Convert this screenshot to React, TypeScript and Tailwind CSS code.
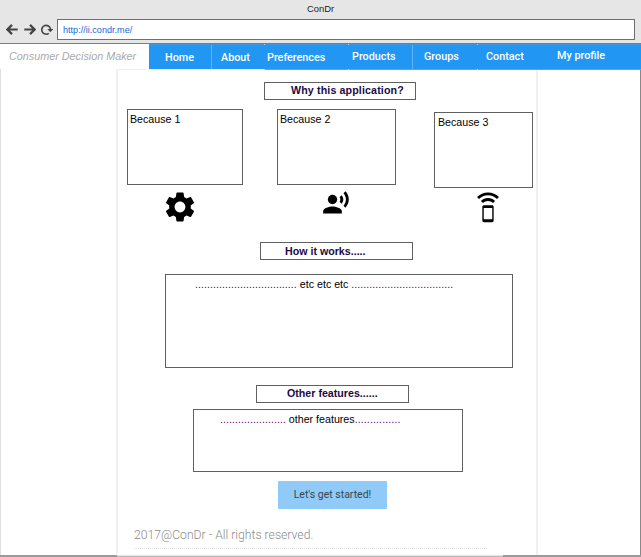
import React from "react";
import { MdSettings, MdRecordVoiceOver, MdSpeakerPhone } from "react-icons/md";

const box = "border border-[#606060] bg-white whitespace-pre";

function Toolbar() {
  return (
    <header className="h-[44px] shrink-0 bg-[#e6e6e6] border-b border-[#7c7c7c]">
      <div className="h-[19px] pt-[1px] pl-[307px] text-[9.4px] leading-[16px] text-[#222]">ConDr</div>
      <div className="flex items-center h-[21px] pl-[6px]">
        <svg width="12" height="12" viewBox="0 0 12 12" fill="none" stroke="#444" strokeWidth="2.2">
          <path d="M6 0.9L1.4 5.5L6 10.1M1.6 5.5H11.7" />
        </svg>
        <svg className="ml-[6px]" width="12" height="12" viewBox="0 0 12 12" fill="none" stroke="#444" strokeWidth="2.2">
          <path d="M6 0.9L10.6 5.5L6 10.1M10.4 5.5H0.3" />
        </svg>
        <svg className="ml-[5px]" width="12" height="12" viewBox="0 0 12 12" fill="none" stroke="#444" strokeWidth="1.6">
          <path d="M7.8 9.3A4.4 4.4 0 1 1 9.5 5" />
          <path d="M6.4 5H12.2L9.3 8.2Z" fill="#444" stroke="none" />
        </svg>
        <div className="ml-[4px] h-[21px] w-[578px] border border-[#707070] bg-white pl-[5px] text-[9.1px] leading-[20px] text-[#1769d2]">
          http://ii.condr.me/
        </div>
      </div>
    </header>
  );
}

function Nav() {
  const item = "shrink-0 whitespace-nowrap";
  const notch =
    "relative before:absolute before:left-0 before:-top-px before:size-px before:bg-[#a5d1f7] after:absolute after:left-0 after:-bottom-px after:size-px after:bg-[#c5e1fa]";
  return (
    <nav className="z-10 flex h-[25px] shrink-0">
      <div className="w-[149px] shrink-0 whitespace-nowrap pl-[9px] text-[10.8px] leading-[25px] italic text-[#aaa]">
        Consumer Decision Maker
      </div>
      <div className="flex items-start font-['Roboto',sans-serif] text-[10.8px] font-medium leading-[25px] text-white">
        <div className="flex h-[25px] border-t border-t-[#3f97df] bg-[#2196f3]">
          <div className={`${item} w-[63px] border-r border-[#64b5f6] pl-[16px]`}>Home</div>
          <div className={`${item} w-[52px] pl-[9px]`}>About</div>
        </div>
        <div className="flex h-[26px] w-[377px] border-t border-b border-t-[#3f97df] border-b-[#55a6ec] bg-[#2196f3]">
          <div className={`${item} ${notch} w-[84px] pl-[3px]`}>Preferences</div>
          <div className={`${item} ${notch} w-[65px] border-r border-[#64b5f6] pl-[4px] leading-[23px]`}>Products</div>
          <div className={`${item} w-[64px] pl-[11px] leading-[23px]`}>Groups</div>
          <div className={`${item} ${notch} w-[64px] pl-[9px] leading-[23px]`}>Contact</div>
          <div className={`${item} w-[100px] pl-[16px] leading-[21px]`}>My profile</div>
        </div>
      </div>
    </nav>
  );
}

function Content() {
  const title = "h-[18px] font-bold leading-[15px] text-[#1c0a45]";
  return (
    <main className="ml-[115px] flex h-[486px] w-[422px] flex-col items-start border-x-2 border-t border-[#f0f0f0] text-[10.67px]">
      <h2 className={`${box} ${title} ml-[146px] mt-[12px] w-[152px] pl-[26px] tracking-[0.13px]`}>Why this application?</h2>
      <div className="mt-[9px] flex items-start leading-[18px] text-black">
        <div className={`${box} ml-[9px] h-[76px] w-[116px] pl-[2px]`}>Because 1</div>
        <div className={`${box} ml-[34px] h-[76px] w-[119px] pl-[2px]`}>Because 2</div>
        <div className={`${box} ml-[38px] mt-[3px] h-[76px] w-[99px] pl-[3px]`}>Because 3</div>
      </div>
      <div className="flex h-[54px] items-start text-black">
        <MdSettings className="ml-[44px] mt-px" size={36} />
        <MdRecordVoiceOver className="ml-[124px] mt-px" size={28} />
        <MdSpeakerPhone className="ml-[121px] mt-[3px]" size={34} />
      </div>
      <h2 className={`${box} ${title} ml-[142px] w-[153px] pl-[24px] leading-[16px]`}>How it works.....</h2>
      <div className={`${box} ml-[47px] mt-[14px] h-[94px] w-[348px] pl-[29px] leading-[18px] text-black`}>
        <span className="tracking-[0.035px] text-[#606]">..................................</span> etc etc etc{" "}
        <span className="tracking-[0.035px] text-[#606]">..................................</span>
      </div>
      <h2 className={`${box} ${title} ml-[138px] mt-[17px] w-[153px] pl-[30px]`}>Other features......</h2>
      <div className={`${box} ml-[75px] mt-[6px] h-[63px] w-[270px] pl-[26px] leading-[19px] text-black`}>
        <span className="tracking-[0.035px] text-[#606]">......................</span> other features
        <span className="tracking-[0.1px] text-[#606]">...............</span>
      </div>
      <button className="ml-[160px] mt-[9px] h-[28px] w-[109px] whitespace-nowrap rounded-[1px] bg-[#90caf9] font-['Roboto',sans-serif] text-[10.5px] leading-[26px] text-[#37474f]">
        Let's get started!
      </button>
      <footer className="ml-[16px] mt-[16px] h-[24px] w-[353px] whitespace-nowrap border-b border-dotted border-[#e2e2e2] font-['Roboto',sans-serif] text-[12.2px] font-light leading-[20px] text-[#8c8c8c]">
        2017@ConDr - All rights reserved.
      </footer>
    </main>
  );
}

export default function App() {
  return (
    <div className="flex h-[557px] w-[641px] flex-col overflow-hidden bg-white font-['Liberation_Sans',Arial,sans-serif]">
      <Toolbar />
      <Nav />
      <div className="h-[486px] border-l border-l-[#dedede] border-r border-r-[#888]">
        <Content />
      </div>
      <div className="flex h-[2px]">
        <div className="w-[117px] bg-[#999]" />
        <div className="w-[386px] border-t border-[#e4e4e4] bg-[#bbb]" />
        <div className="w-[138px] bg-[#999]" />
      </div>
    </div>
  );
}
